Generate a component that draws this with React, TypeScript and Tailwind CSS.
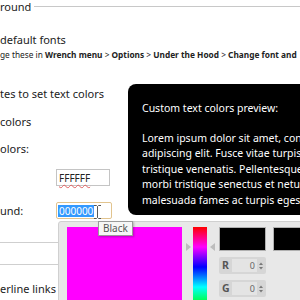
import React from "react";

const SpinIcon = () => (
  <svg width="4" height="8" viewBox="0 0 4 8" className="shrink-0">
    <path d="M0 3 L2 0.5 L4 3 Z" fill="#777" />
    <path d="M0 5 L2 7.5 L4 5 Z" fill="#777" />
  </svg>
);

const IBeam = () => (
  <svg width="9" height="16" viewBox="0 0 9 16">
    <path d="M1 1.5 H3.5 L4.5 2.5 L5.5 1.5 H8 M4.5 2.5 V13.5 M1 14.5 H3.5 L4.5 13.5 L5.5 14.5 H8" fill="none" stroke="#fff" strokeWidth="2.5" />
    <path d="M1 1.5 H3.5 L4.5 2.5 L5.5 1.5 H8 M4.5 2.5 V13.5 M1 14.5 H3.5 L4.5 13.5 L5.5 14.5 H8" fill="none" stroke="#555" strokeWidth="1" />
  </svg>
);

const ChannelField = ({ label }: { label: string }) => (
  <div className="flex items-center w-[47px] h-[17px] rounded-[2px] bg-[#d6d6d6] pl-[3px] pr-[3px]">
    <span className="w-[10px] text-[10.5px] font-bold text-[#555] leading-none">{label}</span>
    <div className="flex-1 h-[13px] bg-[#e4e4e4] flex items-center justify-end pr-[2px] text-[9px] text-[#666] leading-none">
      0
    </div>
    <div className="ml-[2px]">
      <SpinIcon />
    </div>
  </div>
);

export default function App() {
  return (
    <div className="relative w-[300px] h-[300px] overflow-hidden bg-white text-[#222] font-['Noto_Sans',sans-serif]">
      {/* fieldset legend */}
      <div className="flex items-center h-[14px] text-[11px] leading-[14px]">
        <span>round</span>
        <div className="flex-1 h-px bg-[#c8c8c8] ml-[3px] mt-[-2px]"></div>
      </div>

      <div className="mt-[19px] text-[11px] leading-[14px]">default fonts</div>
      <div className="mt-[2px] text-[8.3px] leading-[12px] whitespace-nowrap">
        ge these in <b>Wrench menu</b> &gt; <b>Options</b> &gt; <b>Under the Hood</b> &gt; <b>Change font and</b>
      </div>

      <div className="mt-[23px] flex">
        <div className="w-[128px] shrink-0 text-[11px] leading-[14px] pt-[3px]">
          <div className="whitespace-nowrap">tes to set text colors</div>
          <div className="mt-[14px]">colors</div>
          <div className="mt-[13px]">olors:</div>
          <div className="mt-[13px] ml-[56px] w-[54px] h-[17px] border border-[#c4c4c4] flex items-center pl-[2px] text-[10px] leading-none">
            <span className="underline decoration-wavy decoration-[#e06060] decoration-1 underline-offset-2">FFFFFF</span>
          </div>
          <div className="mt-[16px] flex items-center">
            <span className="w-[56px]">und:</span>
            <div className="relative w-[56px] h-[17px] border border-[#e2c48e] rounded-[2px] flex items-center pl-[1px] text-[10px] leading-none">
              <span className="bg-[#3399ff] text-white px-[1px] py-[1px]">000000</span>
              <div className="absolute left-[36px] top-[1px]">
                <IBeam />
              </div>
            </div>
          </div>
        </div>

        <div className="flex-1 h-[131px] bg-black rounded-l-[8px] text-white text-[10.5px] leading-[15.5px] whitespace-nowrap overflow-hidden pl-[14px] pt-[17px]">
          <div>Custom text colors preview:</div>
          <div className="mt-[14px]">
            <div>Lorem ipsum dolor sit amet, consectetur</div>
            <div>adipiscing elit. Fusce vitae turpis in</div>
            <div>tristique venenatis. Pellentesque habitant</div>
            <div>morbi tristique senectus et netus et</div>
            <div>malesuada fames ac turpis egestas.</div>
          </div>
        </div>
      </div>

      <div className="mt-[23px] h-px bg-[#cfcfcf]"></div>
      <div className="mt-[21px] h-px bg-[#cfcfcf]"></div>
      <div className="mt-[17px] text-[11px] leading-[14px]">erline links</div>

      {/* color picker popup */}
      <div className="absolute left-[58px] top-[221px] w-[260px] h-[100px] bg-[#e8e8e8] border border-[#d0d0d0] rounded-[3px] flex items-start pl-[8px] pt-[5px]">
        <div className="w-[115px] h-[150px] bg-[#ff00ff] shrink-0"></div>
        <div className="flex items-start ml-[4px]">
          <div className="mt-[16px] w-0 h-0 border-y-[4px] border-y-transparent border-l-[5px] border-l-[#bdbdbd]"></div>
          <div className="ml-[2px] w-[14px] h-[120px] bg-[linear-gradient(to_bottom,#ff0000,#ff00ff,#0000ff,#00ffff,#00ff00,#ffff00,#ff0000)]"></div>
          <div className="ml-[3px] mt-[16px] w-0 h-0 border-y-[4px] border-y-transparent border-r-[5px] border-r-[#bdbdbd]"></div>
        </div>
        <div className="ml-[4px] flex flex-col gap-[6px]">
          <div className="flex gap-[7px]">
            <div className="w-[47px] h-[24px] bg-black border border-[#b0b0b0]"></div>
            <div className="w-[47px] h-[24px] bg-black border border-[#b0b0b0]"></div>
          </div>
          <ChannelField label="R" />
          <ChannelField label="G" />
        </div>
      </div>

      {/* tooltip */}
      <div className="absolute left-[98px] top-[221px] h-[15px] px-[4px] border border-[#9a9a9a] bg-[#f6f6f6] shadow-[1px_1px_2px_rgba(0,0,0,0.25)] text-[10px] leading-[13px] text-[#555]">
        Black
      </div>
    </div>
  );
}
